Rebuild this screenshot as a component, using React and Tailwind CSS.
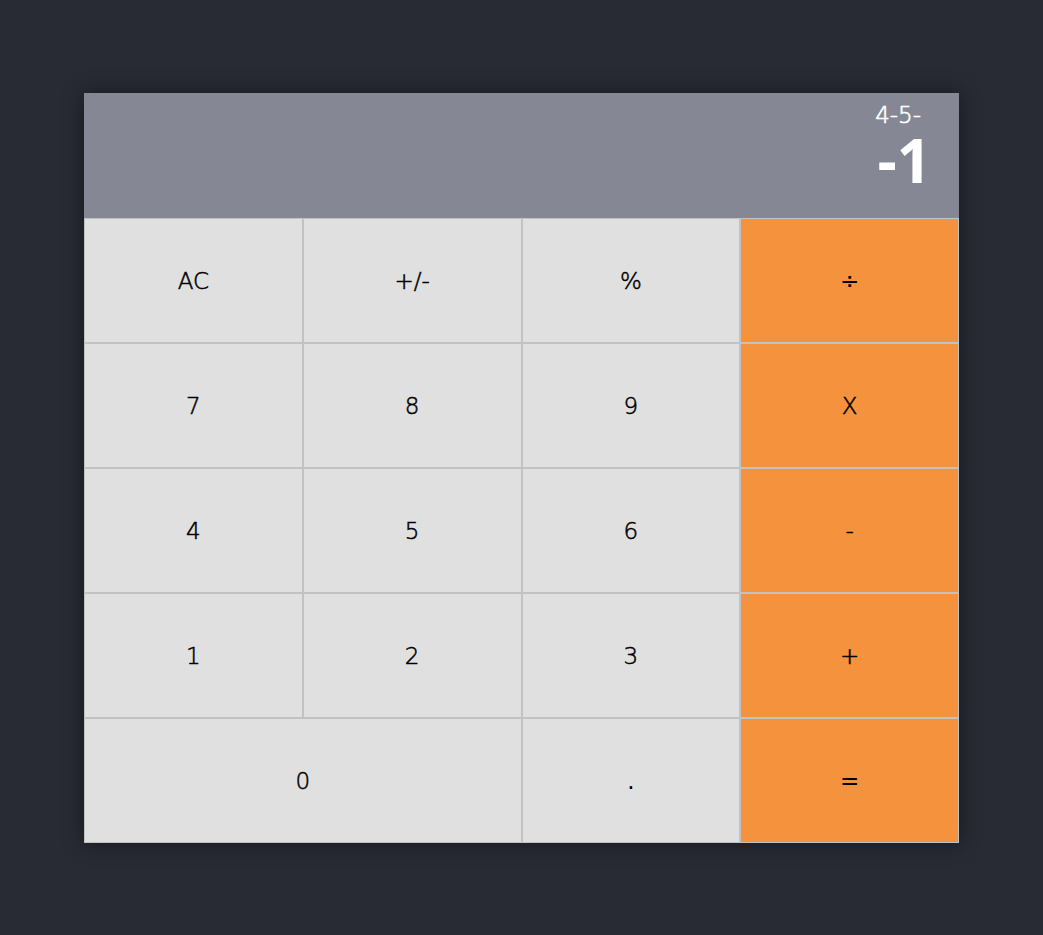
import React from "react";

const keys = [
  { l: "AC" }, { l: "+/-" }, { l: "%" }, { l: "÷", op: true, heavy: true },
  { l: "7" }, { l: "8" }, { l: "9" }, { l: "X", op: true },
  { l: "4" }, { l: "5" }, { l: "6" }, { l: "-", op: true },
  { l: "1" }, { l: "2" }, { l: "3" }, { l: "+", op: true },
  { l: "0", wide: true }, { l: ".", heavy: true }, { l: "=", op: true, heavy: true },
];

export default function App() {
  return (
    <div
      className="min-h-screen w-full bg-[#282b34] flex items-center justify-center"
      style={{ fontFamily: '"DejaVu Sans", Verdana, sans-serif' }}
    >
      <div className="w-[875px] shadow-[0_0_20px_rgba(0,0,0,0.45)]">
        <div className="h-[125px] bg-[#858794] flex flex-col items-end justify-start pr-[38px] pt-[9px] text-white">
          <div className="text-[23px] leading-[26px] font-extralight [-webkit-text-stroke:0.6px_white]">4-5-</div>
          <div className="text-[60px] leading-[60px] font-bold mt-[2px] -mr-[10px] font-['Open_Sans',sans-serif]">-1</div>
        </div>
        <div className="grid grid-cols-4">
          {keys.map((k, i) => (
            <button
              key={i}
              className={`h-[125px] border border-[#c2c2c2] flex items-center justify-center pt-[3px] text-[23px] text-black ${
                k.heavy ? "font-normal" : "font-extralight [-webkit-text-stroke:0.5px_black]"
              } ${k.op ? "bg-[#f5923e]" : "bg-[#e0e0e0]"} ${k.wide ? "col-span-2" : ""}`}
            >
              {k.l}
            </button>
          ))}
        </div>
      </div>
    </div>
  );
}
